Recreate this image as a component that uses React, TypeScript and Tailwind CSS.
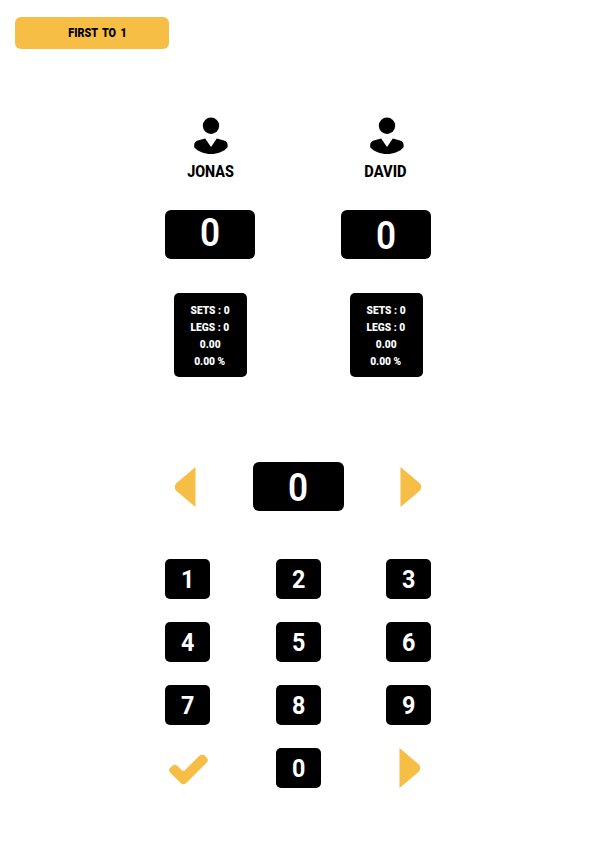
type PlayerProps = { name: string; score: string; raised?: boolean };

const stats = ["SETS : 0", "LEGS : 0", "0.00", "0.00 %"];

function Person() {
  return (
    <svg width="36" height="40" viewBox="0 0 36 40" className="ml-[1.4px] block">
      <circle cx="18" cy="8.7" r="8.2" />
      <path d="M12.2 21.5 L18 30 L23.8 21.5 L31 23.4 Q34.6 24.4 34.6 27.9 V30.3 C31 34.7 24.5 37.1 18 37.1 C11.5 37.1 5 34.7 1.2 30.3 V27.9 Q1.2 24.4 4.8 23.4 Z" />
    </svg>
  );
}

function Player({ name, score, raised }: PlayerProps) {
  return (
    <section className="flex w-[90px] flex-col items-center">
      <Person />
      <h2 className={`mt-[6px] h-[18px] text-[16.3px] leading-[18px] font-extrabold whitespace-nowrap text-black ${raised ? "pl-[2px]" : "pr-[2px]"}`}>
        <span className={raised ? "inline-block scale-x-[0.88]" : "inline-block scale-x-[0.9]"}>{name}</span>
      </h2>
      <div className={`mt-[29px] flex h-[49px] w-[90.5px] justify-center rounded-[6px] bg-black text-[39px] font-semibold text-white ${raised ? "leading-[46px]" : "leading-[52px]"}`}>
        <span className="inline-block scale-x-[0.9]">{score}</span>
      </div>
      <div className="mt-[34px] flex h-[84px] w-[73px] flex-col items-center rounded-[5px] bg-black pt-[9px] text-white">
        {stats.map((line) => (
          <p key={line} className="h-[17px] text-[11px] leading-[17px] font-black whitespace-nowrap">
            <span className="inline-block scale-x-[0.93]">{line}</span>
          </p>
        ))}
      </div>
    </section>
  );
}

function Arrow({ left = false }: { left?: boolean }) {
  return (
    <svg width="22" height="40" viewBox="0 0 22 40" className={left ? "block -scale-x-100" : "block"} fill="#f6be45">
      <path d="M.5 0 L19.5 16.1 Q21.3 18 21.3 20 Q21.3 22 19.5 23.9 L.5 40 Z" />
    </svg>
  );
}

function Key({ value }: { value: string }) {
  return (
    <button className="flex h-[40px] w-[45px] items-center justify-center rounded-[5px] bg-black text-[26.5px] leading-[40px] font-bold text-white">
      <span className="inline-block scale-x-[0.88]">{value}</span>
    </button>
  );
}

export default function App() {
  return (
    <main className="flex h-[843px] w-[596px] flex-col bg-white pt-[17px] font-[Roboto,sans-serif]">
      <header className="ml-[15px] flex h-[31.5px] w-[154px] justify-center rounded-[6px] bg-[#f6be45] pl-[11px] text-[12px] leading-[32px] font-black text-black">
        <span className="inline-block scale-x-[0.9] [word-spacing:2px]">FIRST TO 1</span>
      </header>

      <div className="mt-[68.5px] ml-[165px] flex w-[266px] justify-between">
        <Player name="JONAS" score="0" raised />
        <Player name="DAVID" score="0" />
      </div>

      <div className="mt-[85px] ml-[174px] flex h-[49px] w-[248px] items-center justify-between">
        <Arrow left />
        <div className="ml-[1px] flex h-[49px] w-[90.5px] justify-center rounded-[6px] bg-black text-[39px] leading-[52px] font-semibold text-white">
          <span className="inline-block scale-x-[0.9]">0</span>
        </div>
        <Arrow />
      </div>

      <div className="mt-[47.6px] ml-[165px] grid w-[266.4px] grid-cols-[45px_45px_45px] justify-between gap-y-[23.3px]">
        {["1", "2", "3", "4", "5", "6", "7", "8", "9"].map((value) => (
          <Key key={value} value={value} />
        ))}
        <div className="flex h-[40px] items-center pt-[3px] pl-[3px]">
          <svg width="42" height="34" viewBox="0 0 42 34" fill="#f6be45">
            <path d="M2 15.1 L4.4 12.8 Q6.3 11 9 12.6 L13.8 17.2 Q15.3 18.5 16.8 17.2 L31.3 2.8 Q34.2 .9 37 2.8 L38.8 4.7 Q40.9 7.4 38.8 9.5 L18 30.2 Q15.5 32.1 13 30.2 L2 19.4 Q.1 17.2 2 15.1 Z" />
          </svg>
        </div>
        <Key value="0" />
        <div className="pl-[12.2px]">
          <Arrow />
        </div>
      </div>
    </main>
  );
}
